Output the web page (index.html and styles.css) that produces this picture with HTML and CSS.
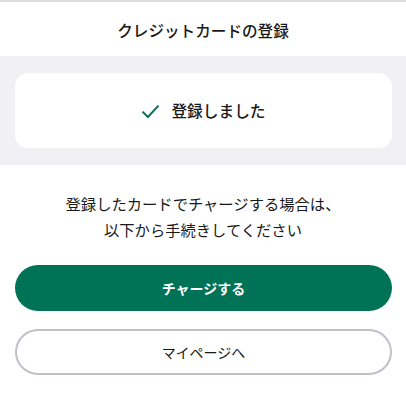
FILE: index.html
```html
<!DOCTYPE html>
<html lang="ja">
<head>
<meta charset="utf-8">
<link rel="stylesheet" href="styles.css">
</head>
<body>
<header class="header">クレジットカードの登録</header>
<section class="band">
  <div class="card">
    <svg class="check" width="19" height="15" viewBox="0 0 19 15"><path d="M1.5 7.6 L6.9 13 L17.5 1.6" fill="none" stroke="#0b6e55" stroke-width="2"/></svg>
    <span class="done">登録しました</span>
  </div>
</section>
<p class="msg">登録したカードでチャージする場合は、<br>以下から手続きしてください</p>
<div class="actions">
  <button class="btn primary">チャージする</button>
  <button class="btn secondary">マイページへ</button>
</div>
</body>
</html>
```

FILE: styles.css
```css
* { box-sizing: border-box; }
html, body { margin: 0; padding: 0; background: #fff; }
body {
  font-family: "Noto Sans CJK JP", "Noto Sans", sans-serif;
  color: #1a1a1a;
  border-top: 2px solid #dcdce3;
}
.header {
  height: 54px;
  display: flex;
  align-items: center;
  justify-content: center;
  font-size: 15.6px;
  font-weight: 500;
  padding-top: 2px;
}
.band {
  background: #f0f0f5;
  padding: 17px 14px 17px 15px;
}
.card {
  background: #fff;
  border-radius: 13px;
  height: 75px;
  display: flex;
  align-items: center;
  justify-content: center;
  gap: 11px;
}
.check { margin-top: 1px; }
.done { font-size: 15.7px; font-weight: 500; }
.msg {
  margin: 25px 0 0;
  text-align: center;
  font-size: 15.3px;
  line-height: 26px;
}
.actions {
  padding: 23px 14px 0 15px;
  display: flex;
  flex-direction: column;
  gap: 18px;
}
.btn {
  font-family: inherit;
  height: 46px;
  border-radius: 23px;
  font-size: 14px;
  width: 100%;
}
.primary {
  background: #007357;
  color: #fff;
  border: none;
  font-weight: 700;
}
.secondary {
  background: #fff;
  color: #1a1a1a;
  border: 2px solid #c0c0c8;
  font-weight: 400;
}
```
